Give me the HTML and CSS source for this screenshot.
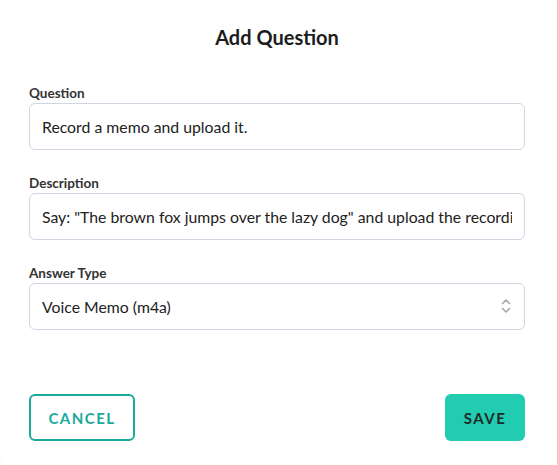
FILE: index.html
```html
<!DOCTYPE html>
<html lang="en">
<head>
    <meta charset="UTF-8">
    <meta name="viewport" content="width=device-width, initial-scale=1.0">
    <title>Add Question</title>
    <link rel="stylesheet" href="styles.css">
</head>
<body>
    <div class="modal">
        <h2 class="modal-title">Add Question</h2>

        <form class="question-form">
            <div class="field">
                <label for="question">Question</label>
                <input type="text" id="question" value="Record a memo and upload it.">
            </div>
            <div class="field">
                <label for="description">Description</label>
                <input type="text" id="description" value="Say: &quot;The brown fox jumps over the lazy dog&quot; and upload the recording.">
            </div>
            <div class="field">
                <label for="answerType">Answer Type</label>
                <div class="select-wrap">
                    <select id="answerType">
                        <option>Voice Memo (m4a)</option>
                        <option>Text</option>
                        <option>Photo</option>
                    </select>
                    <svg class="select-arrows" width="10" height="16" viewBox="0 0 10 16">
                        <path d="M1.5 5.5 L5 2 L8.5 5.5" fill="none" stroke="#a3a8ae" stroke-width="1.6" stroke-linecap="round" stroke-linejoin="round"/>
                        <path d="M1.5 10.5 L5 14 L8.5 10.5" fill="none" stroke="#a3a8ae" stroke-width="1.6" stroke-linecap="round" stroke-linejoin="round"/>
                    </svg>
                </div>
            </div>

            <div class="actions">
                <button type="button" class="btn btn-outline">Cancel</button>
                <button type="button" class="btn btn-primary">Save</button>
            </div>
        </form>
    </div>
</body>
</html>
```

FILE: styles.css
```css
body {
    margin: 0;
    font-family: Lato, "Noto Sans", sans-serif;
    background: #fff;
    color: #222;
}
.modal {
    width: 557px;
    height: 465px;
    box-sizing: border-box;
    padding: 24px 32px 0 29px;
    border-radius: 8px;
    box-shadow: 0 0 3px rgba(0, 0, 0, 0.06);
}
.modal-title {
    margin: 0;
    font-size: 20px;
    font-weight: 700;
    line-height: 26px;
    text-align: center;
    color: #1c1c1c;
}
.question-form {
    margin-top: 32px;
}
.field {
    margin-bottom: 22px;
}
.field label {
    display: block;
    padding-top: 3px;
    font-size: 13.5px;
    font-weight: 700;
    line-height: 16px;
    color: #333;
    margin-bottom: 2px;
}
.field input,
.field select {
    display: block;
    width: 100%;
    height: 47px;
    box-sizing: border-box;
    padding: 0 12px;
    border: 1px solid #cfd8e2;
    border-radius: 6px;
    font-family: inherit;
    font-size: 15.8px;
    color: #222;
    background: #fff;
    outline: none;
}
.select-wrap {
    position: relative;
}
.field select {
    appearance: none;
    -webkit-appearance: none;
}
.select-arrows {
    position: absolute;
    right: 14px;
    top: 15px;
    pointer-events: none;
}
.actions {
    display: flex;
    justify-content: space-between;
    margin-top: 64px;
}
.btn {
    height: 47px;
    border-radius: 6px;
    font-family: inherit;
    font-size: 15px;
    font-weight: 700;
    letter-spacing: 1.5px;
    text-transform: uppercase;
    cursor: pointer;
}
.btn-outline {
    width: 106px;
    background: #fff;
    border: 2px solid #1aaa9c;
    color: #1aaa9c;
}
.btn-primary {
    width: 80px;
    background: #22ccb0;
    border: none;
    color: #1e2b2b;
}
```
